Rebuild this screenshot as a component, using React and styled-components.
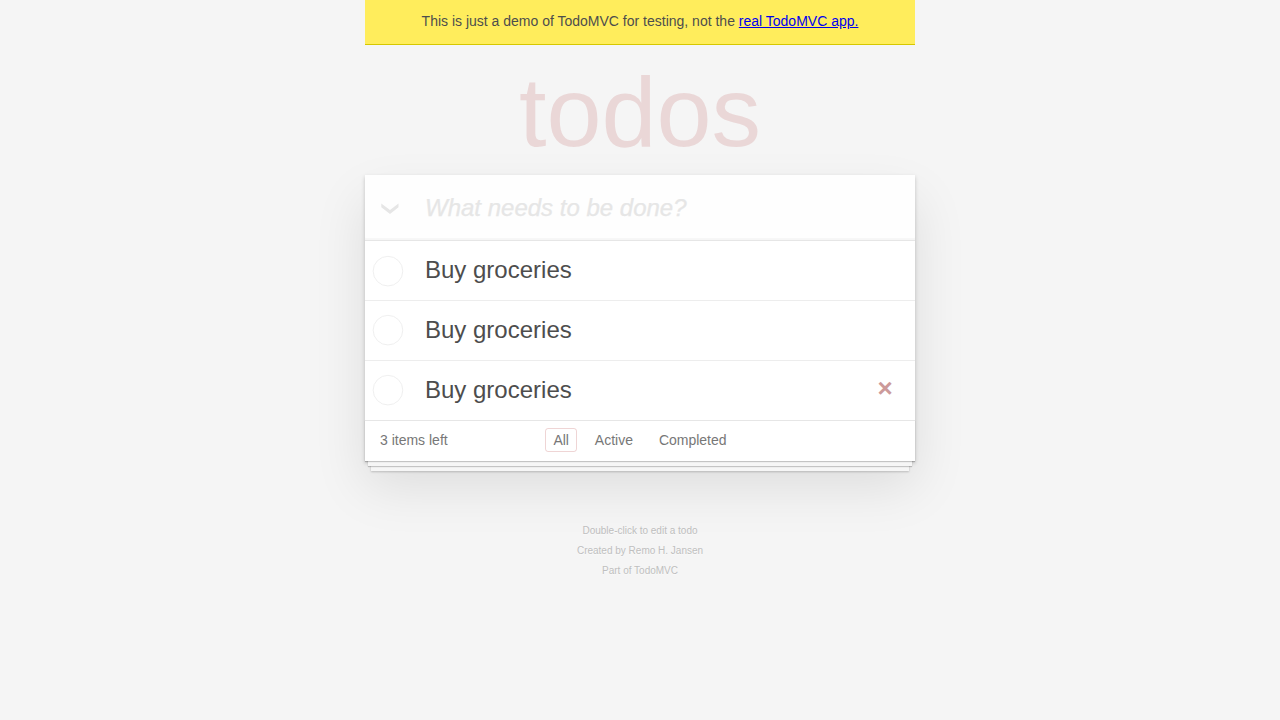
import React from 'react';
import styled, { createGlobalStyle } from 'styled-components';

const GlobalStyle = createGlobalStyle`
  body {
    margin: 0;
    background: #f5f5f5;
    color: #4d4d4d;
    font: 14px/1.4em "Liberation Sans", Arial, sans-serif;
  }
`;

const Page = styled.div`
  width: 550px;
  margin: 0 auto;
`;

const Banner = styled.div`
  padding: 12px;
  text-align: center;
  background: #ffed5c;
  border-bottom: 1px solid #d6c800;
`;

const BannerLink = styled.a`
  color: #0000ee;
  text-decoration: underline;
`;

const Title = styled.h1`
  box-sizing: border-box;
  height: 130px;
  margin: 0;
  padding-top: 57.6px;
  font-size: 99px;
  font-weight: 100;
  text-align: center;
  color: rgba(175, 47, 47, 0.15);
  text-rendering: optimizeLegibility;
`;

const Card = styled.section`
  position: relative;
  background: #fff;
  box-shadow: 0 2px 4px 0 rgba(0, 0, 0, 0.2), 0 25px 50px 0 rgba(0, 0, 0, 0.1);
`;

const EntryRow = styled.header`
  display: flex;
  align-items: center;
  background: rgba(0, 0, 0, 0.003);
  box-shadow: inset 0 -2px 1px rgba(0, 0, 0, 0.03);
`;

const ToggleAll = styled.button`
  display: flex;
  flex: none;
  width: 60px;
  padding: 3px 0 0 16px;
  border: 0;
  background: none;
`;

const NewTodo = styled.input`
  box-sizing: border-box;
  flex: 1;
  min-width: 0;
  height: 65.6px;
  padding: 17px 16px 15px 0;
  border: 0;
  outline: 0;
  background: transparent;
  font: inherit;
  font-size: 24px;
  line-height: 1.4em;
  &::placeholder {
    font-style: italic;
    font-weight: 300;
    color: #e6e6e6;
    opacity: 1;
    -webkit-text-stroke: 0.25px #e6e6e6;
  }
`;

const List = styled.ul`
  margin: 0;
  padding: 0;
  list-style: none;
  border-top: 1px solid #e6e6e6;
`;

const Item = styled.li`
  display: flex;
  align-items: center;
  border-bottom: 1px solid #ededed;
  font-size: 24px;
  &:last-child {
    border-bottom: 0;
  }
`;

const Label = styled.label`
  flex: 1;
  padding: 15px 15px 15px 20px;
  line-height: 1.2;
`;

const Destroy = styled.button`
  width: 40px;
  height: 40px;
  margin: 0 10px 4px 0;
  padding: 0;
  border: 0;
  background: none;
  color: #cc9a9a;
  font: inherit;
  font-size: 26px;
  font-weight: bold;
  line-height: 40px;
`;

const Footer = styled.footer`
  display: grid;
  grid-template-columns: 1fr auto 1fr;
  height: 20px;
  padding: 10px 15px;
  border-top: 1px solid #e6e6e6;
  color: #777;
  box-shadow: 0 1px 1px rgba(0, 0, 0, 0.2), 0 8px 0 -3px #f6f6f6,
    0 9px 1px -3px rgba(0, 0, 0, 0.2), 0 16px 0 -6px #f6f6f6,
    0 17px 2px -6px rgba(0, 0, 0, 0.2);
`;

const Filters = styled.nav`
  white-space: nowrap;
`;

const Filter = styled.a`
  margin: 3px;
  padding: 3px 7px;
  border: 1px solid ${(p) => (p.$selected ? 'rgba(175, 47, 47, 0.2)' : 'transparent')};
  border-radius: 3px;
`;

const Info = styled.footer`
  margin-top: 65px;
  color: #bfbfbf;
  font-size: 10px;
  text-align: center;
  text-shadow: 0 1px 0 rgba(255, 255, 255, 0.5);
`;

const InfoLine = styled.p`
  margin: 10px 0;
  line-height: 1;
`;

const Chevron = () => (
  <svg width="18" height="12" viewBox="0 0 18 12">
    <path d="M0.3 0.5 L9 6.9 L17.5 0.5 V4.3 L9 10.9 L0.3 4.3 Z" fill="#e6e6e6" />
  </svg>
);

const Circle = () => (
  <svg width="40" height="40" viewBox="-10 -18 100 135">
    <circle cx="50" cy="50" r="50" fill="none" stroke="#ededed" strokeWidth="3" />
  </svg>
);

const todos = [
  { id: 1, title: 'Buy groceries' },
  { id: 2, title: 'Buy groceries' },
  { id: 3, title: 'Buy groceries', active: true },
];

export default function App() {
  return (
    <Page>
      <GlobalStyle />
      <Banner>
        This is just a demo of TodoMVC for testing, not the{' '}
        <BannerLink href="#">real TodoMVC app.</BannerLink>
      </Banner>
      <Title>todos</Title>
      <Card>
        <EntryRow>
          <ToggleAll aria-label="Mark all as complete">
            <Chevron />
          </ToggleAll>
          <NewTodo placeholder="What needs to be done?" />
        </EntryRow>
        <List>
          {todos.map((todo) => (
            <Item key={todo.id}>
              <Circle />
              <Label>{todo.title}</Label>
              {todo.active && <Destroy>×</Destroy>}
            </Item>
          ))}
        </List>
        <Footer>
          <span>3 items left</span>
          <Filters>
            <Filter $selected>All</Filter> <Filter>Active</Filter> <Filter>Completed</Filter>
          </Filters>
        </Footer>
      </Card>
      <Info>
        <InfoLine>Double-click to edit a todo</InfoLine>
        <InfoLine>Created by Remo H. Jansen</InfoLine>
        <InfoLine>Part of TodoMVC</InfoLine>
      </Info>
    </Page>
  );
}
